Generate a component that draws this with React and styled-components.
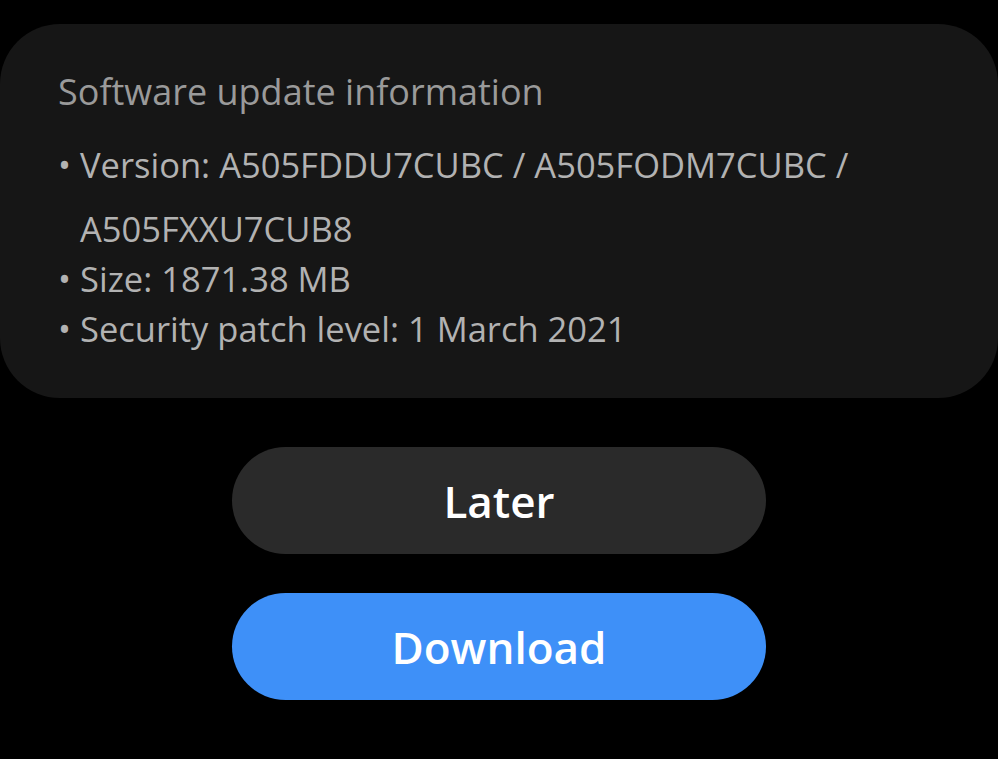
import styled, { createGlobalStyle } from "styled-components";

const GlobalStyle = createGlobalStyle`
  html, body {
    margin: 0;
    padding: 0;
    background: #000;
  }
  body {
    font-family: "Open Sans", "Noto Sans", sans-serif;
  }
`;

const Page = styled.div`
  width: 998px;
  height: 759px;
  background: #000;
  padding-top: 24px;
  box-sizing: border-box;
  display: flex;
  flex-direction: column;
  align-items: center;
`;

const Card = styled.section`
  width: 998px;
  box-sizing: border-box;
  background: #161616;
  border-radius: 60px;
  padding: 46px 30px 45px 58px;
`;

const Title = styled.h2`
  margin: 0 0 27px;
  font-size: 36px;
  line-height: 44px;
  font-weight: 400;
  color: #9a9a9a;
`;

const List = styled.ul`
  list-style: none;
  margin: 0;
  padding: 0;
  display: flex;
  flex-direction: column;
  gap: 2px;
`;

const Item = styled.li`
  display: flex;
  font-size: 34.5px;
  line-height: 48px;
  color: #b2b2b2;
  white-space: nowrap;
  &::before {
    content: "•";
    width: 22px;
    flex: none;
  }
`;

const Lines = styled.div`
  display: flex;
  flex-direction: column;
  gap: 16px;
`;

const Actions = styled.div`
  margin-top: 49px;
  display: flex;
  flex-direction: column;
  gap: 39px;
`;

const Button = styled.button`
  width: 534px;
  height: 107px;
  border: none;
  border-radius: 54px;
  background: ${({ $primary }) => ($primary ? "#3e90f8" : "#2a2a2a")};
  color: #fff;
  font-family: "Open Sans", "Noto Sans", sans-serif;
  font-size: 44px;
  font-weight: 600;
  cursor: pointer;
`;

export default function App() {
  return (
    <>
      <GlobalStyle />
      <Page>
        <Card>
          <Title>Software update information</Title>
          <List>
            <Item>
              <Lines>
                <span>Version: A505FDDU7CUBC / A505FODM7CUBC /</span>
                <span>A505FXXU7CUB8</span>
              </Lines>
            </Item>
            <Item>Size: 1871.38 MB</Item>
            <Item>Security patch level: 1 March 2021</Item>
          </List>
        </Card>
        <Actions>
          <Button>Later</Button>
          <Button $primary>Download</Button>
        </Actions>
      </Page>
    </>
  );
}
